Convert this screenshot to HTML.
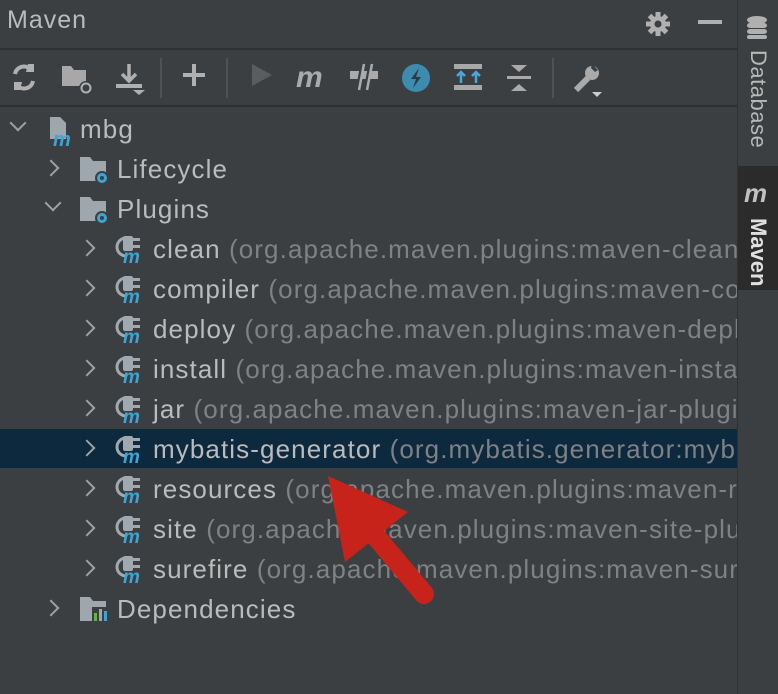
<!DOCTYPE html>
<html><head><style>
body{margin:0;width:778px;height:694px;background:#3c3f41;overflow:hidden;position:relative;font-family:"Liberation Sans",sans-serif;color:#bbbbbb}
.abs{position:absolute}
.row{position:absolute;left:0;width:737px;height:40px;font-size:26px;letter-spacing:1.1px;line-height:40px;white-space:nowrap;overflow:hidden}
.row .t{position:absolute;top:0}
.g{color:#7f8184}
.ch{position:absolute;top:13px;width:10px;height:10px;border-right:2.5px solid #a0a0a0;border-bottom:2.5px solid #a0a0a0}
.r{transform:rotate(-45deg)}
.d{transform:rotate(45deg);top:8px}
</style></head><body>
<div class="abs" style="left:7px;top:6px;font-size:25px;letter-spacing:1px;color:#bbbbbb">Maven</div>
<svg class="abs" style="left:644px;top:10px" width="28" height="28" viewBox="0 0 28 28"><g fill="#b0b0b0"><circle cx="14" cy="14" r="8"/><g stroke="#b0b0b0" stroke-width="5"><line x1="14" y1="2" x2="14" y2="26"/><line x1="2" y1="14" x2="26" y2="14"/><line x1="5.5" y1="5.5" x2="22.5" y2="22.5"/><line x1="22.5" y1="5.5" x2="5.5" y2="22.5"/></g></g><circle cx="14" cy="14" r="3.5" fill="#3c3f41"/></svg>
<div class="abs" style="left:698px;top:20px;width:24px;height:4px;background:#b0b0b0"></div>
<div class="abs" style="left:0;top:48px;width:737px;height:2px;background:#2e3032"></div>
<div class="abs" style="left:0;top:105px;width:737px;height:2px;background:#2e3032"></div>
<svg class="abs" style="left:0;top:50px" width="737" height="55">
<g fill="none" stroke="#b0b0b0" stroke-width="4"><path d="M15 24a9 9 0 0 1 16-4M33 31a9 9 0 0 1-16 4"/></g>
<path d="M28 14l6 0 0 8-8 0z" fill="#b0b0b0"/><path d="M20 40l-6 0 0-8 8 0z" fill="#b0b0b0"/>
<path d="M62 16h9l3 4h12v16H62z" fill="#a8a8a8"/><circle cx="86" cy="38" r="7" fill="#3c3f41"/><circle cx="86" cy="38" r="4.5" fill="none" stroke="#b0b0b0" stroke-width="2"/>
<path d="M129 14v16M122 24l7 7 7-7" stroke="#b0b0b0" stroke-width="3.5" fill="none"/><rect x="116" y="34" width="26" height="4" fill="#b0b0b0"/><path d="M133 40h12l-6 5z" fill="#b0b0b0"/>
<rect x="160" y="8" width="2" height="40" fill="#4e5254"/>
<path d="M194 14v22M183 25h22" stroke="#b0b0b0" stroke-width="4"/>
<rect x="226" y="8" width="2" height="40" fill="#4e5254"/>
<path d="M252 14l20 11-20 11z" fill="#5a5c5e"/>
<text x="296" y="37" font-family="Liberation Sans" font-style="italic" font-weight="bold" font-size="30" fill="#aaa">m</text>
<path d="M350 21h28v8h-28z" fill="#aaa"/><path d="M362 14l-5 26M370 14l-5 26" stroke="#3c3f41" stroke-width="3"/><path d="M364 14l-5 26M372 14l-5 26" stroke="#aaa" stroke-width="2.5"/>
<circle cx="416" cy="28" r="14" fill="#3d8cb0"/><path d="M419 18l-8 11h5l-3 9 8-11h-5z" fill="#2b3a44"/>
<rect x="454" y="14" width="28" height="5" fill="#a8a8a8"/><rect x="454" y="35" width="28" height="5" fill="#a8a8a8"/><path d="M461 33v-10M457 26l4-4 4 4M476 33v-10M472 26l4-4 4 4" stroke="#4aa8d8" stroke-width="2.5" fill="none"/>
<path d="M511 15h16l-8 7zM511 41h16l-8-7z" fill="#aaa"/><rect x="507" y="26" width="24" height="3" fill="#aaa"/>
<rect x="552" y="8" width="2" height="40" fill="#4e5254"/>
<path d="M576 40l12-12" stroke="#aaa" stroke-width="6"/><circle cx="592" cy="23" r="7" fill="#aaa"/><path d="M592 14l6 6-3 2-4-4z" fill="#3c3f41"/><path d="M592 42h10l-5 5z" fill="#ccc"/>
</svg>
<div class="abs" style="left:737px;top:0;width:41px;height:694px;background:#3c3f41;border-left:1px solid #2e3032"></div>
<div class="abs" style="left:738px;top:166px;width:40px;height:124px;background:#2b2b2b"></div>
<svg class="abs" style="left:744px;top:14px" width="26" height="26"><g fill="#b0b0b0"><ellipse cx="13" cy="6" rx="10" ry="4"/><rect x="3" y="9" width="20" height="5" rx="3"/><rect x="3" y="15" width="20" height="5" rx="3"/><rect x="3" y="21" width="20" height="4" rx="2"/></g></svg>
<div class="abs" style="left:745px;top:50px;writing-mode:vertical-rl;font-size:22px;letter-spacing:0.5px;color:#b8b8b8">Database</div>
<div class="abs" style="left:744px;top:178px;font-size:26px;font-weight:bold;font-style:italic;color:#c0c0c0">m</div>
<div class="abs" style="left:745px;top:218px;writing-mode:vertical-rl;font-size:22px;font-weight:bold;color:#e0e0e0">Maven</div>
<div class="abs" style="left:0;top:429px;width:737px;height:39px;background:#0d293e"></div>
<svg width="0" height="0" style="position:absolute"><defs>
<g id="pl"><path d="M12 4a9 9 0 0 0 0 18" fill="none" stroke="#a0a8b0" stroke-width="3"/><rect x="9" y="2" width="10" height="15" rx="2" fill="#a0a8b0"/><rect x="19" y="4" width="7" height="3" fill="#a0a8b0"/><rect x="19" y="11" width="7" height="3" fill="#a0a8b0"/><text x="9" y="29" font-family="Liberation Sans" font-style="italic" font-weight="bold" font-size="19" fill="#3ea4d6">m</text></g>
<g id="fd"><path d="M0 2h10l3 4h13v20H0z" fill="#9ea6ae"/><circle cx="22" cy="23" r="7" fill="#3c3f41"/><circle cx="22" cy="23" r="5" fill="#3ea4d6"/><circle cx="22" cy="23" r="2" fill="#3c3f41"/></g>
</defs></svg>
<div class="row" style="top:109px"><div class="ch d" style="left:12px"></div><svg class="abs" style="left:46px;top:6px" width="30" height="32"><path d="M4 2h10l6 6v16H4z" fill="#9ea6ae"/><text x="7" y="31" font-family="Liberation Sans" font-style="italic" font-weight="bold" font-size="20" fill="#3ea4d6">m</text></svg><span class="t" style="left:80px">mbg</span></div>
<div class="row" style="top:149px"><div class="ch r" style="left:45px"></div><svg class="abs" style="left:80px;top:6px" width="32" height="32"><use href="#fd"/></svg><span class="t" style="left:117px">Lifecycle</span></div>
<div class="row" style="top:189px"><div class="ch d" style="left:47px"></div><svg class="abs" style="left:80px;top:6px" width="32" height="32"><use href="#fd"/></svg><span class="t" style="left:117px">Plugins</span></div>
<div class="row" style="top:229px"><div class="ch r" style="left:81px"></div><svg class="abs" style="left:114px;top:5px" width="34" height="32"><use href="#pl"/></svg><span class="t" style="left:153px">clean <span class="g">(org.apache.maven.plugins:maven-clean-plugin</span></span></div>
<div class="row" style="top:269px"><div class="ch r" style="left:81px"></div><svg class="abs" style="left:114px;top:5px" width="34" height="32"><use href="#pl"/></svg><span class="t" style="left:153px">compiler <span class="g">(org.apache.maven.plugins:maven-compiler</span></span></div>
<div class="row" style="top:309px"><div class="ch r" style="left:81px"></div><svg class="abs" style="left:114px;top:5px" width="34" height="32"><use href="#pl"/></svg><span class="t" style="left:153px">deploy <span class="g">(org.apache.maven.plugins:maven-deploy</span></span></div>
<div class="row" style="top:349px"><div class="ch r" style="left:81px"></div><svg class="abs" style="left:114px;top:5px" width="34" height="32"><use href="#pl"/></svg><span class="t" style="left:153px">install <span class="g">(org.apache.maven.plugins:maven-install</span></span></div>
<div class="row" style="top:389px"><div class="ch r" style="left:81px"></div><svg class="abs" style="left:114px;top:5px" width="34" height="32"><use href="#pl"/></svg><span class="t" style="left:153px">jar <span class="g">(org.apache.maven.plugins:maven-jar-plugin</span></span></div>
<div class="row" style="top:429px"><div class="ch r" style="left:81px"></div><svg class="abs" style="left:114px;top:5px" width="34" height="32"><use href="#pl"/></svg><span class="t" style="left:153px">mybatis-generator <span class="g">(org.mybatis.generator:mybatis</span></span></div>
<div class="row" style="top:469px"><div class="ch r" style="left:81px"></div><svg class="abs" style="left:114px;top:5px" width="34" height="32"><use href="#pl"/></svg><span class="t" style="left:153px">resources <span class="g">(org.apache.maven.plugins:maven-res</span></span></div>
<div class="row" style="top:509px"><div class="ch r" style="left:81px"></div><svg class="abs" style="left:114px;top:5px" width="34" height="32"><use href="#pl"/></svg><span class="t" style="left:153px">site <span class="g">(org.apache.maven.plugins:maven-site-plugin</span></span></div>
<div class="row" style="top:549px"><div class="ch r" style="left:81px"></div><svg class="abs" style="left:114px;top:5px" width="34" height="32"><use href="#pl"/></svg><span class="t" style="left:153px">surefire <span class="g">(org.apache.maven.plugins:maven-sure</span></span></div>
<div class="row" style="top:589px"><div class="ch r" style="left:45px"></div><svg class="abs" style="left:80px;top:6px" width="32" height="32"><path d="M0 2h10l3 4h13v20H0z" fill="#9ea6ae"/><rect x="12" y="12" width="16" height="16" fill="#3c3f41"/><rect x="14" y="18" width="3" height="8" fill="#62b543"/><rect x="19" y="14" width="3" height="12" fill="#9ea6ae"/><rect x="24" y="16" width="3" height="10" fill="#3ea4d6"/></svg><span class="t" style="left:117px">Dependencies</span></div>
<svg class="abs" style="left:0;top:0" width="737" height="694"><path d="M424 594L352 508" stroke="#c8231b" stroke-width="20" stroke-linecap="round"/><path d="M328 476L408 512L345 562z" fill="#c8231b"/></svg>
</body></html>
